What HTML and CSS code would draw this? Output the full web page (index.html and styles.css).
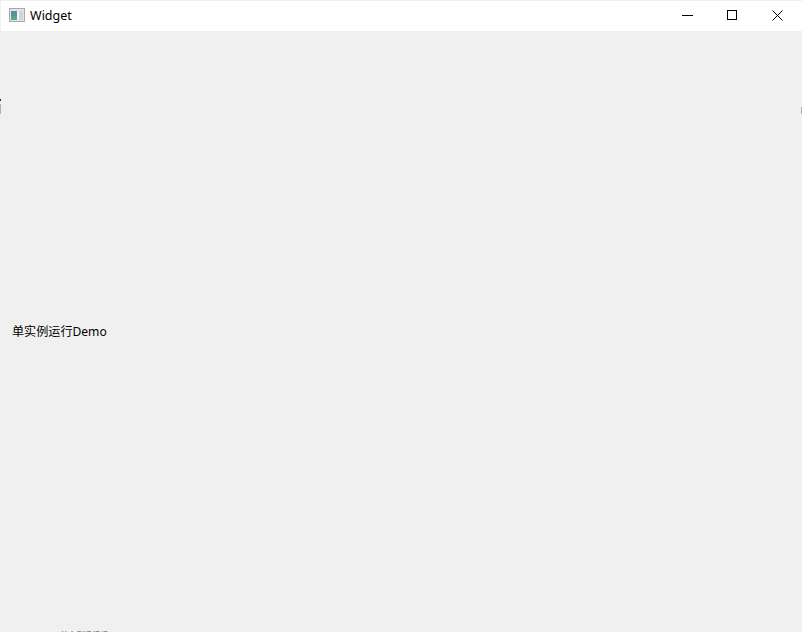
FILE: index.html
```html
<!DOCTYPE html>
<html lang="en">
<head>
    <meta charset="UTF-8">
    <title>Widget</title>
    <link rel="stylesheet" href="styles.css">
</head>
<body>
<div class="window">
    <div class="titlebar">
        <svg class="app-icon" width="16" height="14" viewBox="0 0 16 14">
            <rect x="0.5" y="0.5" width="15" height="13" fill="#e4e4e4" stroke="#a8a8a8"/>
            <rect x="2" y="3" width="6" height="9" fill="#5d8f98"/>
            <rect x="2" y="8" width="6" height="4" fill="#5fa58a"/>
            <rect x="8" y="3" width="2" height="9" fill="#f4f4f4"/>
            <rect x="10" y="3" width="4" height="9" fill="#ccd8d8"/>
        </svg>
        <span class="title">Widget</span>
        <div class="controls">
            <div class="control">
                <svg width="11" height="11" viewBox="0 0 11 11"><path d="M0 5.5H11" stroke="#000" fill="none"/></svg>
            </div>
            <div class="control">
                <svg width="11" height="11" viewBox="0 0 11 11"><rect x="0.5" y="0.5" width="9" height="9" stroke="#000" fill="none"/></svg>
            </div>
            <div class="control">
                <svg width="11" height="11" viewBox="0 0 11 11"><path d="M0.5 0.5L10.5 10.5M10.5 0.5L0.5 10.5" stroke="#000" fill="none"/></svg>
            </div>
        </div>
    </div>
    <div class="content">
        <p class="demo-label">单实例运行Demo</p>
    </div>
    <div class="clipped-line">单实例运行程</div>
    <div class="edge-mark edge-left-dark"></div>
    <div class="edge-mark edge-left"></div>
    <div class="edge-mark edge-right"></div>
</div>
</body>
</html>
```

FILE: styles.css
```css
html, body {
    margin: 0;
    height: 100%;
    overflow: hidden;
}

body {
    font-family: "Liberation Sans", "Noto Sans CJK SC", sans-serif;
    background-color: #f0f0f0;
    color: #000;
}

.window {
    position: relative;
    height: 632px;
    display: flex;
    flex-direction: column;
    overflow: hidden;
}

.titlebar {
    height: 28px;
    margin: 1px 0 0 1px;
    flex-shrink: 0;
    display: flex;
    align-items: center;
    padding: 0 2px 2px 8px;
    background-color: #fff;
}

.app-icon {
    margin-right: 5px;
}

.title {
    font-family: "Noto Sans", sans-serif;
    font-size: 12.5px;
    color: #000;
}

.controls {
    margin-left: auto;
    display: flex;
}

.control {
    width: 45px;
    height: 28px;
    display: flex;
    align-items: center;
    justify-content: center;
}

.content {
    flex: 1;
    display: flex;
    align-items: center;
    padding: 2px 0 0 12px;
}

.demo-label {
    margin: 0;
    font-family: "Noto Sans", "Noto Sans CJK SC", sans-serif;
    font-size: 12.1px;
    line-height: 16px;
}

.clipped-line {
    height: 1px;
    flex-shrink: 0;
    overflow: hidden;
    padding-left: 60px;
    font-family: "Noto Sans CJK SC", sans-serif;
    font-size: 8px;
    line-height: 8px;
    color: #444;
}

.edge-mark {
    position: absolute;
    width: 1px;
}

.edge-left-dark {
    left: 0;
    top: 99px;
    height: 2px;
    background-color: #2a2a6e;
}

.edge-left {
    left: 0;
    top: 104px;
    height: 10px;
    background-color: #b0b0b0;
}

.edge-right {
    right: 0;
    top: 107px;
    height: 7px;
    background-color: #b0b0b0;
}
```
